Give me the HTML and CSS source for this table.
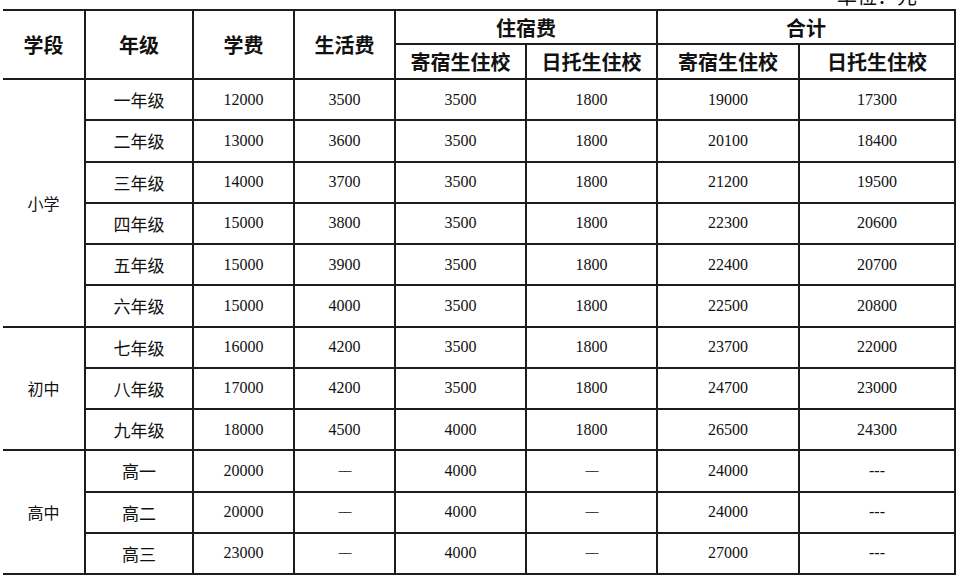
FILE: index.html
```html
<!DOCTYPE html>
<html lang="zh-CN">
<head>
<meta charset="utf-8">
<title>学费表</title>
<link rel="stylesheet" href="styles.css">
</head>
<body>
<div class="unit-row"><span class="unit">单位：元</span></div>
<table class="fees">
  <colgroup>
    <col class="c1"><col class="c2"><col class="c3"><col class="c4">
    <col class="c5"><col class="c6"><col class="c7"><col class="c8">
  </colgroup>
  <thead>
    <tr class="h1">
      <th rowspan="2" class="first">学段</th>
      <th rowspan="2">年级</th>
      <th rowspan="2">学费</th>
      <th rowspan="2">生活费</th>
      <th colspan="2">住宿费</th>
      <th colspan="2">合计</th>
    </tr>
    <tr class="h2">
      <th>寄宿生住校</th>
      <th>日托生住校</th>
      <th>寄宿生住校</th>
      <th>日托生住校</th>
    </tr>
  </thead>
  <tbody>
    <tr><td rowspan="6" class="first stage">小学</td><td class="grade">一年级</td><td>12000</td><td>3500</td><td>3500</td><td>1800</td><td>19000</td><td>17300</td></tr>
    <tr><td class="grade">二年级</td><td>13000</td><td>3600</td><td>3500</td><td>1800</td><td>20100</td><td>18400</td></tr>
    <tr><td class="grade">三年级</td><td>14000</td><td>3700</td><td>3500</td><td>1800</td><td>21200</td><td>19500</td></tr>
    <tr><td class="grade">四年级</td><td>15000</td><td>3800</td><td>3500</td><td>1800</td><td>22300</td><td>20600</td></tr>
    <tr><td class="grade">五年级</td><td>15000</td><td>3900</td><td>3500</td><td>1800</td><td>22400</td><td>20700</td></tr>
    <tr><td class="grade">六年级</td><td>15000</td><td>4000</td><td>3500</td><td>1800</td><td>22500</td><td>20800</td></tr>
    <tr><td rowspan="3" class="first stage">初中</td><td class="grade">七年级</td><td>16000</td><td>4200</td><td>3500</td><td>1800</td><td>23700</td><td>22000</td></tr>
    <tr><td class="grade">八年级</td><td>17000</td><td>4200</td><td>3500</td><td>1800</td><td>24700</td><td>23000</td></tr>
    <tr><td class="grade">九年级</td><td>18000</td><td>4500</td><td>4000</td><td>1800</td><td>26500</td><td>24300</td></tr>
    <tr><td rowspan="3" class="first stage">高中</td><td class="grade">高一</td><td>20000</td><td class="dash">––</td><td>4000</td><td class="dash">––</td><td>24000</td><td>---</td></tr>
    <tr><td class="grade">高二</td><td>20000</td><td class="dash">––</td><td>4000</td><td class="dash">––</td><td>24000</td><td>---</td></tr>
    <tr><td class="grade">高三</td><td>23000</td><td class="dash">––</td><td>4000</td><td class="dash">––</td><td>27000</td><td>---</td></tr>
  </tbody>
</table>
</body>
</html>
```

FILE: styles.css
```css
html, body {
  margin: 0;
  padding: 0;
  background: #ffffff;
}

body {
  color: #111111;
  font-family: "Liberation Serif", "Noto Sans CJK SC", serif;
  overflow: hidden;
}

.unit-row {
  height: 9px;
  display: flex;
  justify-content: flex-end;
  padding-right: 42px;
  overflow: visible;
}

.unit {
  font-family: "Noto Sans CJK SC", sans-serif;
  font-size: 20px;
  line-height: 20px;
  margin-top: -14px;
  color: #111;
}

.fees {
  margin-left: 3px;
  width: 952px;
  border-collapse: collapse;
  table-layout: fixed;
}

.c1 { width: 82px; }
.c2 { width: 108px; }
.c3 { width: 101px; }
.c4 { width: 101px; }
.c5 { width: 131px; }
.c6 { width: 131px; }
.c7 { width: 142px; }
.c8 { width: 156px; }

.fees th,
.fees td {
  border: 2px solid #1c1c1c;
  padding: 0;
  text-align: center;
  vertical-align: middle;
}

.fees .first {
  border-left: none;
}

.fees th {
  font-family: "Noto Sans CJK SC", sans-serif;
  font-weight: 700;
  font-size: 20px;
  color: #111;
}

.h1 { height: 34px; }
.h2 { height: 35px; }

.fees td {
  height: 37px;
  font-size: 16px;
}

.fees tbody tr {
  height: 41.25px;
}

.fees td.grade {
  font-family: "Noto Sans CJK SC", sans-serif;
  font-size: 17px;
}

.fees td.stage {
  font-family: "Noto Sans CJK SC", sans-serif;
  font-size: 16px;
}

.fees td.dash {
  font-size: 14px;
  letter-spacing: -1px;
}
```
